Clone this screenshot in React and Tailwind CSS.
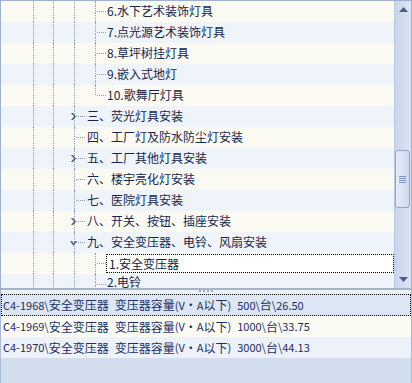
const LINE = 'border-dotted border-[#8b9dc3]';

const treeRows = [
  { level: 4, text: '6.水下艺术装饰灯具' },
  { level: 4, text: '7.点光源艺术装饰灯具' },
  { level: 4, text: '8.草坪树挂灯具' },
  { level: 4, text: '9.嵌入式地灯' },
  { level: 4, text: '10.歌舞厅灯具', last: true },
  { level: 3, text: '三、荧光灯具安装', arrow: 'right' },
  { level: 3, text: '四、工厂灯及防水防尘灯安装' },
  { level: 3, text: '五、工厂其他灯具安装', arrow: 'right' },
  { level: 3, text: '六、楼宇亮化灯安装' },
  { level: 3, text: '七、医院灯具安装' },
  { level: 3, text: '八、开关、按钮、插座安装', arrow: 'right' },
  { level: 3, text: '九、安全变压器、电铃、风扇安装', arrow: 'down' },
  { level: 4, text: '1.安全变压器', selected: true },
  { level: 4, text: '2.电铃', clipped: true },
];

const items = [
  'C4-1968\\安全变压器 变压器容量(V·A以下) 500\\台\\26.50',
  'C4-1969\\安全变压器 变压器容量(V·A以下) 1000\\台\\33.75',
  'C4-1970\\安全变压器 变压器容量(V·A以下) 3000\\台\\44.13',
];

// ASCII runs are drawn a bit smaller so they keep the half-width look,
// spaces get a fixed half-width gap
const Mixed = ({ text }) =>
  text.split(/( |[!-~]+)/).map((part, i) => {
    if (part === ' ') return <span key={i} className="inline-block w-[6px]"> </span>;
    if (/^[!-~]+$/.test(part))
      return (
        <span key={i} className="text-[11px]">
          {part}
        </span>
      );
    return <span key={i}>{part}</span>;
  });

const ArrowRight = () => (
  <svg className="absolute left-[-3px] top-[7px]" width="5" height="7" viewBox="0 0 5 7">
    <path d="M0 0h2l3 3.5L2 7H0l3-3.5z" fill="#4e5d7d" />
  </svg>
);

const ArrowDown = () => (
  <svg className="absolute left-[-4px] top-[9px]" width="7" height="5" viewBox="0 0 7 5">
    <path d="M0 0h2.2l1.3 2.2L4.8 0H7L3.5 5z" fill="#5a6888" />
  </svg>
);

const TreeRow = ({ row, index }) => {
  const stripe = index % 2 === 0 ? 'bg-[#fbfbf3]' : 'bg-[#eff3fa]';
  const guides = row.level === 4 ? ['w-[20px]', 'w-[21px]', 'w-[21px]'] : ['w-[20px]', 'w-[21px]'];
  const conn = row.selected ? 'w-[11px]' : row.level === 4 ? 'w-[12px]' : 'w-[13px]';

  return (
    <div className={`flex h-[21px] shrink-0 ${stripe}`}>
      <div className="w-[32px] shrink-0" />
      {guides.map((w, i) => (
        <div key={i} className={`${w} shrink-0 border-l ${LINE}`} />
      ))}
      {/* connector: vertical + horizontal dotted line */}
      <div className={`relative flex shrink-0 flex-col ${conn}`}>
        <div className={`h-[10px] border-l ${LINE}`} />
        <div className={`ml-[2px] w-[9px] border-t ${LINE}`} />
        <div className={`flex-1 ${row.last ? '' : `border-l ${LINE}`}`} />
        {row.arrow === 'right' && <ArrowRight />}
        {row.arrow === 'down' && <ArrowDown />}
      </div>
      {row.selected ? (
        <div className="my-[1px] flex-1 whitespace-nowrap border border-dotted border-black bg-white pl-[2px] leading-[17px] text-[#111a33]">
          {row.text}
        </div>
      ) : (
        <span
          className={`whitespace-nowrap text-[#17274c] ${row.clipped ? 'leading-[16px]' : 'leading-[19px]'}`}
        >
          {row.text}
        </span>
      )}
    </div>
  );
};

const Scrollbar = () => (
  <div className="flex w-[17px] shrink-0 flex-col border-l border-[#bccbe4] bg-linear-to-r from-[#c8d5eb] to-[#dbe5f3]">
    <div className="flex h-[17px] shrink-0 items-center justify-center">
      <svg width="9" height="5" viewBox="0 0 9 5">
        <path d="M4.5 0L9 5H0z" fill="#4d5e82" />
      </svg>
    </div>
    <div className="flex-1">
      <div className="mr-[1px] mt-[132px] flex h-[58px] flex-col items-center justify-center gap-[1px] rounded-[3px] border border-[#8fa5cd] bg-linear-to-r from-[#e6edf8] to-[#ccd9ed]">
        {[0, 1, 2, 3].map((i) => (
          <div key={i} className="h-[1px] w-[7px] bg-[#7d93bf]" />
        ))}
      </div>
    </div>
    <div className="flex h-[17px] shrink-0 items-center justify-center">
      <svg width="9" height="5" viewBox="0 0 9 5">
        <path d="M0 0h9L4.5 5z" fill="#4d5e82" />
      </svg>
    </div>
  </div>
);

export default function App() {
  return (
    <div className="flex h-[383px] w-[412px] flex-col overflow-hidden bg-[#d2ddee] font-['Noto_Sans_CJK_SC',sans-serif] text-[12px]">
      {/* tree panel */}
      <div className="flex h-[288px] shrink-0 border-x border-t border-[#9fb1d0]">
        <div className="flex min-w-0 flex-1 flex-col overflow-hidden">
          {treeRows.map((row, i) => (
            <TreeRow key={i} row={row} index={i} />
          ))}
        </div>
        <Scrollbar />
      </div>

      {/* splitter */}
      <div className="flex h-[6px] shrink-0 flex-col border-x border-[#9fb1d0]">
        <div className="h-[2px] bg-[#a8b4c8]" />
        <div className="flex flex-1 justify-center gap-[2px] bg-[#edf2f9]">
          {[0, 1, 2, 3].map((i) => (
            <div key={i} className="h-[2px] w-[2px] bg-[#97a8c8]" />
          ))}
        </div>
      </div>

      {/* item list */}
      <div className="flex flex-1 flex-col border-x border-[#a9bbd9]">
        <div className="flex h-[22px] items-center whitespace-nowrap border border-dotted border-black bg-[#dce6f4] pl-[1px] text-[#1c2f63]">
          <Mixed text={items[0]} />
        </div>
        <div className="flex h-[21px] items-center whitespace-nowrap bg-[#fbfbf3] pl-[2px] text-[#1c2f63]">
          <Mixed text={items[1]} />
        </div>
        <div className="flex h-[21px] items-center whitespace-nowrap bg-[#edf2fa] pl-[2px] text-[#1c2f63]">
          <Mixed text={items[2]} />
        </div>
      </div>
    </div>
  );
}
